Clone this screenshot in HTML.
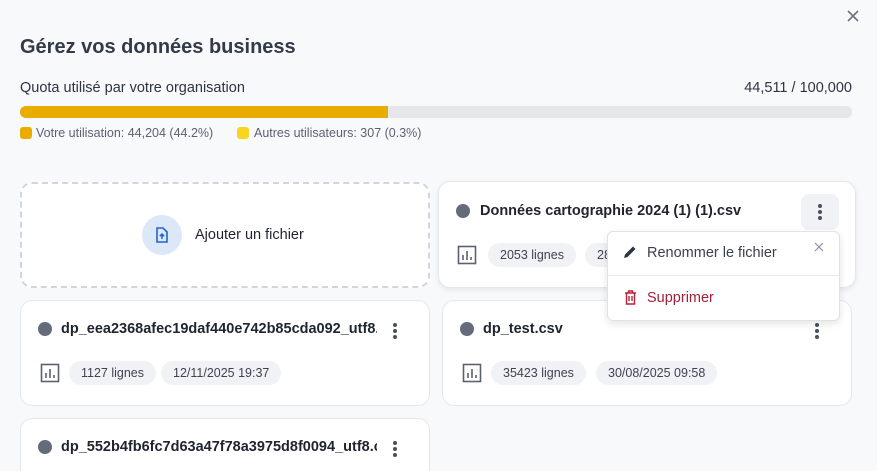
<!DOCTYPE html>
<html style="overflow:hidden;width:877px;height:471px"><head><meta charset="utf-8"><style>
*{box-sizing:border-box;margin:0;padding:0}
body{width:877px;height:471px;overflow:hidden;background:#f8f9fb;font-family:"Liberation Sans",sans-serif;color:#1f2430;position:relative}
.abs{position:absolute}
.card{position:absolute;background:#fff;border:1px solid #e4e7ec;border-radius:12px}
.dot{position:absolute;width:14px;height:14px;border-radius:50%;background:#646b7a}
.name{position:absolute;font-weight:bold;font-size:14.5px;white-space:nowrap;overflow:hidden}
.chip{position:absolute;height:24px;line-height:24px;border-radius:12px;background:#f0f2f5;font-size:12.5px;color:#3d4350;padding:0 12px;white-space:nowrap}
.keb{position:absolute;width:4px}
.keb i{display:block;width:4px;height:4px;border-radius:50%;background:#4a505c;margin-bottom:2px}
</style></head><body>
<svg class="abs" style="left:846px;top:9px" width="14" height="14" viewBox="0 0 14 14"><path d="M2 2L12 12M12 2L2 12" stroke="#6b7280" stroke-width="1.6"/></svg>
<div class="abs" style="left:20px;top:36px;font-size:20px;font-weight:bold;color:#343b48">Gérez vos données business</div>
<div class="abs" style="left:20px;top:80px;font-size:14.5px;color:#2d3340">Quota utilisé par votre organisation</div>
<div class="abs" style="right:25px;top:80px;font-size:14.5px;color:#2d3340">44,511 / 100,000</div>
<div class="abs" style="left:20px;top:106px;width:832px;height:12px;border-radius:6px;background:#e5e7eb;overflow:hidden"><div style="width:368px;height:12px;background:#e9ac00"></div></div>
<div class="abs" style="left:20px;top:127px;width:12px;height:12px;border-radius:3px;background:#e9ac00"></div>
<div class="abs" style="left:36px;top:126px;font-size:12.5px;color:#5b6170">Votre utilisation: 44,204 (44.2%)</div>
<div class="abs" style="left:237px;top:127px;width:12px;height:12px;border-radius:3px;background:#f7d520"></div>
<div class="abs" style="left:254px;top:126px;font-size:12.5px;color:#5b6170">Autres utilisateurs: 307 (0.3%)</div>

<div class="abs" style="left:20px;top:182px;width:410px;height:106px;border:2px dashed #d2d6dc;border-radius:12px;background:#fff"></div>
<div class="abs" style="left:142px;top:215px;width:40px;height:40px;border-radius:50%;background:#dce8f8"></div>
<svg class="abs" style="left:155px;top:227px" width="14" height="16" viewBox="0 0 14 16"><path d="M2 1h6l4 4v10H2z" fill="none" stroke="#2563c9" stroke-width="1.6"/><path d="M7 12V7M4.8 9.2L7 7l2.2 2.2" stroke="#2563c9" stroke-width="1.5" fill="none"/></svg>
<div class="abs" style="left:195px;top:227px;font-size:14.5px">Ajouter un fichier</div>

<div class="card" style="left:438px;top:181px;width:418px;height:107px;box-shadow:0 2px 6px rgba(0,0,0,.08)"></div>
<div class="dot" style="left:456px;top:204px"></div>
<div class="name" style="left:480px;top:203px">Données cartographie 2024 (1) (1).csv</div>
<div class="abs" style="left:801px;top:194px;width:38px;height:36px;border-radius:8px;background:#f0f2f5"></div>
<div class="keb" style="left:818px;top:204px"><i></i><i></i><i></i></div>
<svg class="abs" style="left:457px;top:245px" width="20" height="20" viewBox="0 0 20 20"><rect x="1.5" y="1.5" width="17" height="17" fill="none" stroke="#5b6170" stroke-width="1.6"/><path d="M6 15V10M10 15V6M14 15V12" stroke="#5b6170" stroke-width="1.6"/></svg>
<div class="chip" style="left:488px;top:243px">2053 lignes</div>
<div class="chip" style="left:585px;top:243px;width:40px">28</div>

<div class="card" style="left:20px;top:300px;width:410px;height:106px"></div>
<div class="dot" style="left:38px;top:322px"></div>
<div class="name" style="left:61px;top:321px;width:316px">dp_eea2368afec19daf440e742b85cda092_utf8.csv</div>
<div class="keb" style="left:393px;top:323px"><i></i><i></i><i></i></div>
<svg class="abs" style="left:40px;top:363px" width="20" height="20" viewBox="0 0 20 20"><rect x="1.5" y="1.5" width="17" height="17" fill="none" stroke="#5b6170" stroke-width="1.6"/><path d="M6 15V10M10 15V6M14 15V12" stroke="#5b6170" stroke-width="1.6"/></svg>
<div class="chip" style="left:69px;top:361px">1127 lignes</div>
<div class="chip" style="left:161px;top:361px">12/11/2025 19:37</div>

<div class="card" style="left:442px;top:300px;width:410px;height:106px"></div>
<div class="dot" style="left:460px;top:322px"></div>
<div class="name" style="left:483px;top:321px">dp_test.csv</div>
<div class="keb" style="left:815px;top:323px"><i></i><i></i><i></i></div>
<svg class="abs" style="left:462px;top:363px" width="20" height="20" viewBox="0 0 20 20"><rect x="1.5" y="1.5" width="17" height="17" fill="none" stroke="#5b6170" stroke-width="1.6"/><path d="M6 15V10M10 15V6M14 15V12" stroke="#5b6170" stroke-width="1.6"/></svg>
<div class="chip" style="left:491px;top:361px">35423 lignes</div>
<div class="chip" style="left:596px;top:361px">30/08/2025 09:58</div>

<div class="card" style="left:20px;top:418px;width:410px;height:53px;border-bottom:none;border-radius:12px 12px 0 0"></div>
<div class="dot" style="left:38px;top:440px"></div>
<div class="name" style="left:61px;top:439px;width:316px">dp_552b4fb6fc7d63a47f78a3975d8f0094_utf8.csv</div>
<div class="keb" style="left:393px;top:441px"><i></i><i></i><i></i></div>

<div class="abs" style="left:607px;top:231px;width:233px;height:90px;background:#fff;border:1px solid #dfe2e7;border-radius:6px;box-shadow:0 3px 8px rgba(0,0,0,.1)"></div>
<svg class="abs" style="left:623px;top:245px" width="14" height="14" viewBox="0 0 14 14"><path d="M1 13l1-3.5L10 1.5l2.5 2.5L4.5 12z" fill="#2d3340"/></svg>
<div class="abs" style="left:647px;top:245px;font-size:14.5px;color:#3a404c">Renommer le fichier</div>
<svg class="abs" style="left:814px;top:242px" width="10" height="10" viewBox="0 0 10 10"><path d="M1 1L9 9M9 1L1 9" stroke="#8a909c" stroke-width="1.2"/></svg>
<div class="abs" style="left:608px;top:275px;width:231px;height:1px;background:#e4e7ec"></div>
<svg class="abs" style="left:624px;top:290px" width="13" height="15" viewBox="0 0 13 15"><path d="M1 3h11M4.5 3V1h4v2M2.5 3v11h8V3M5 6v5M8 6v5" fill="none" stroke="#b4233a" stroke-width="1.4"/></svg>
<div class="abs" style="left:647px;top:290px;font-size:14.5px;color:#a3203a">Supprimer</div>
</body></html>
